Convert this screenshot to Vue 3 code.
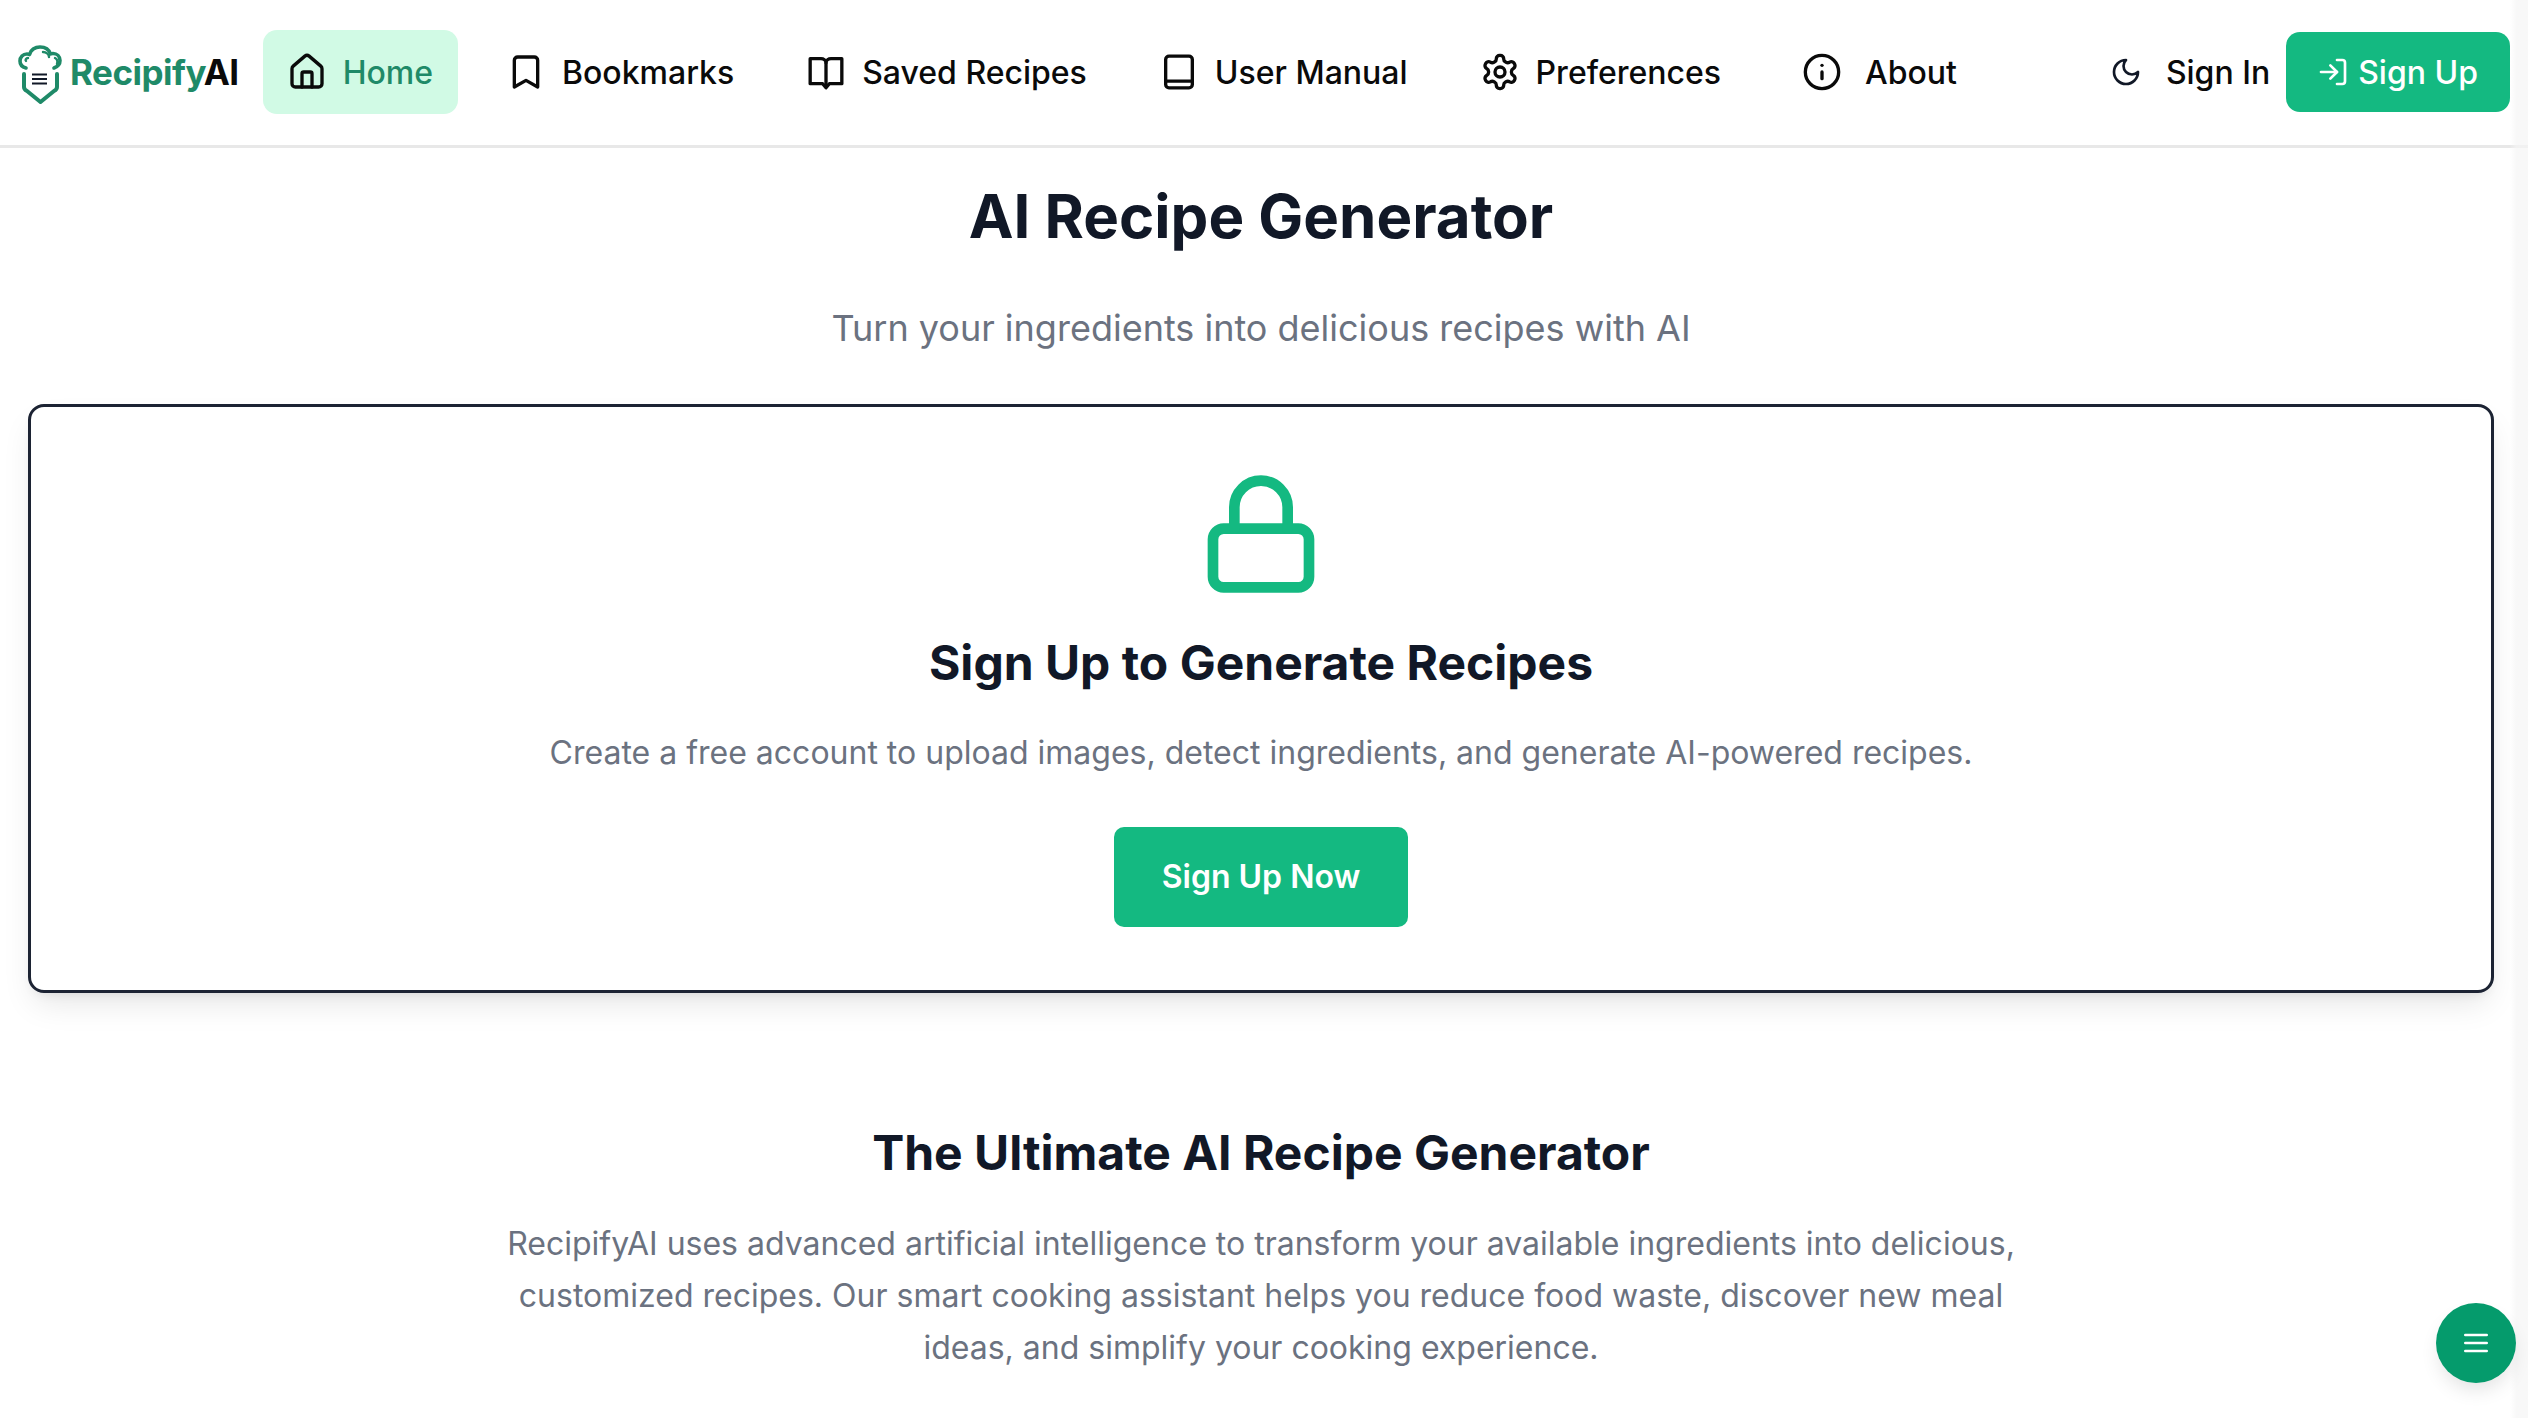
<template>
  <div class="page">
    <header class="topbar">
      <div class="brand">
        <svg class="brand__mark" viewBox="0 0 44 60" fill="none" stroke="#1f8a68" stroke-width="3.6" stroke-linecap="round" stroke-linejoin="round">
          <path d="M8 23c-4-1-6-3.500-6-7 0-4 3-7 7-7 1 0 1.500 0 2.500.5C12.500 5 17 2 22 2c5 0 9 2.500 10.500 7 1-.5 1.500-.5 2.500-.5 4 0 7 3 7 7 0 3.500-2 6-6 7.500" />
          <path d="M8 16c-1-1 0-3 2-3M25 7c3 0 6 2 6 5M37 13c2 1 3 3 2 6" stroke-width="2.4" />
          <path d="M6 29v13c0 2 1 3 3 4l13.500 11 13.500-11c2-1 3-2 3-4V29" stroke-width="4" />
          <path d="M14 29.500h15M14 34h15M14 38.500h15" stroke="#111827" stroke-width="2.2" stroke-linecap="butt" />
        </svg>
        <span class="brand__name">Recipify<span class="brand__ai">AI</span></span>
      </div>

      <nav class="menu">
        <a class="menu__item menu__item--active">
          <svg class="icon" viewBox="0 0 24 24">
            <path d="M15 21v-8a1 1 0 0 0-1-1h-4a1 1 0 0 0-1 1v8" />
            <path d="M3 10a2 2 0 0 1 .709-1.528l7-5.999a2 2 0 0 1 2.582 0l7 5.999A2 2 0 0 1 21 10v9a2 2 0 0 1-2 2H5a2 2 0 0 1-2-2z" />
          </svg>
          Home
        </a>
        <a class="menu__item">
          <svg class="icon" viewBox="0 0 24 24">
            <path d="m19 21-7-4-7 4V5a2 2 0 0 1 2-2h10a2 2 0 0 1 2 2v16z" />
          </svg>
          Bookmarks
        </a>
        <a class="menu__item">
          <svg class="icon" viewBox="0 0 24 24">
            <path d="M12 6.500V20.500" />
            <path d="M12 6.500C12 5 10.500 4 9 4H2.500v15H10l2 2.500 2-2.500h7.500V4H15c-1.500 0-3 1-3 2.500z" />
          </svg>
          Saved Recipes
        </a>
        <a class="menu__item">
          <svg class="icon" viewBox="0 0 24 24">
            <rect x="4" y="2.500" width="16" height="19" rx="2" />
            <path d="M4 17.500h16" />
          </svg>
          User Manual
        </a>
        <a class="menu__item">
          <svg class="icon" viewBox="0 0 24 24">
            <path d="M12.220 2h-.44a2 2 0 0 0-2 2v.18a2 2 0 0 1-1 1.730l-.43.25a2 2 0 0 1-2 0l-.15-.08a2 2 0 0 0-2.730.73l-.22.38a2 2 0 0 0 .73 2.730l.15.1a2 2 0 0 1 1 1.720v.51a2 2 0 0 1-1 1.740l-.15.09a2 2 0 0 0-.73 2.730l.22.38a2 2 0 0 0 2.730.73l.15-.08a2 2 0 0 1 2 0l.43.25a2 2 0 0 1 1 1.730V20a2 2 0 0 0 2 2h.44a2 2 0 0 0 2-2v-.18a2 2 0 0 1 1-1.730l.43-.25a2 2 0 0 1 2 0l.15.08a2 2 0 0 0 2.730-.73l.22-.39a2 2 0 0 0-.73-2.730l-.15-.08a2 2 0 0 1-1-1.740v-.5a2 2 0 0 1 1-1.740l.15-.09a2 2 0 0 0 .73-2.730l-.22-.38a2 2 0 0 0-2.730-.73l-.15.08a2 2 0 0 1-2 0l-.43-.25a2 2 0 0 1-1-1.730V4a2 2 0 0 0-2-2z" />
            <circle cx="12" cy="12" r="3" />
          </svg>
          Preferences
        </a>
        <a class="menu__item menu__item--about">
          <svg class="icon" viewBox="0 0 24 24">
            <circle cx="12" cy="12" r="10" />
            <path d="M12 16v-4" />
            <path d="M12 8h.01" />
          </svg>
          About
        </a>
      </nav>

      <div class="account">
        <button class="account__theme" type="button">
          <svg class="icon icon--small" viewBox="0 0 24 24">
            <path d="M12 3a6 6 0 0 0 9 9 9 9 0 1 1-9-9Z" />
          </svg>
        </button>
        <a class="account__signin">Sign In</a>
        <button class="account__signup" type="button">
          <svg class="icon icon--small" viewBox="0 0 24 24">
            <path d="M15 3h4a2 2 0 0 1 2 2v14a2 2 0 0 1-2 2h-4" />
            <path d="m10 17 5-5-5-5" />
            <path d="M15 12H3" />
          </svg>
          Sign Up
        </button>
      </div>
    </header>

    <main class="content">
      <h1 class="content__title">AI Recipe Generator</h1>
      <p class="content__sub">Turn your ingredients into delicious recipes with AI</p>

      <section class="gate">
        <svg class="gate__lock" viewBox="0 0 24 24">
          <rect x="3" y="11" width="18" height="11" rx="2" ry="2" />
          <path d="M7 11V7a5 5 0 0 1 10 0v4" />
        </svg>
        <h2 class="gate__title">Sign Up to Generate Recipes</h2>
        <p class="gate__text">Create a free account to upload images, detect ingredients, and generate AI-powered recipes.</p>
        <button class="gate__button" type="button">Sign Up Now</button>
      </section>

      <section class="intro">
        <h2 class="intro__title">The Ultimate AI Recipe Generator</h2>
        <p class="intro__text">
          RecipifyAI uses advanced artificial intelligence to transform your available ingredients into delicious, customized recipes. Our smart cooking assistant helps you reduce food waste, discover new meal ideas, and simplify your cooking experience.
        </p>
      </section>
    </main>

    <div class="edge"></div>

    <button class="fab" type="button">
      <svg class="icon icon--small" viewBox="0 0 24 24">
        <path d="M4 12h16" />
        <path d="M4 6h16" />
        <path d="M4 18h16" />
      </svg>
    </button>
  </div>
</template>

<script setup>
</script>

<style>
html,
body {
  margin: 0;
  overflow: hidden;
  background: #fff;
}
</style>

<style scoped>
.page {
  position: relative;
  height: 1418px;
  overflow: hidden;
  font-family: Inter, "Liberation Sans", sans-serif;
  color: #111827;
  background: #fff;
}

.icon {
  width: 40px;
  height: 40px;
  flex: none;
  fill: none;
  stroke: currentColor;
  stroke-width: 2;
  stroke-linecap: round;
  stroke-linejoin: round;
}

.icon--small {
  width: 32px;
  height: 32px;
}

.topbar {
  display: flex;
  align-items: center;
  box-sizing: border-box;
  height: 148px;
  padding: 0 18px 1px;
  border-bottom: 3px solid #e8e8e8;
}

.brand {
  display: flex;
  align-items: center;
  gap: 8px;
  margin-right: 24px;
}

.brand__mark {
  width: 44px;
  height: 60px;
  flex: none;
  margin-top: 6px;
}

.brand__name {
  font-size: 35px;
  font-weight: 700;
  letter-spacing: -0.5px;
  color: #1f8a68;
}

.brand__ai {
  color: #0a0a0a;
}

.menu {
  display: flex;
  align-items: center;
  gap: 24px;
}

.menu__item {
  display: flex;
  align-items: center;
  gap: 16px;
  height: 84px;
  padding: 0 24px;
  border-radius: 14px;
  font-size: 32px;
  font-weight: 500;
  color: #0a0a0a;
}

.menu__item--active {
  padding-right: 25px;
  background: #d1fae5;
  color: #1f8a68;
}

.menu__item--active .icon {
  color: #0a0a0a;
}

.menu__item--about {
  gap: 23px;
  margin-left: 9px;
}

.account {
  display: flex;
  align-items: center;
  margin-left: auto;
}

.account__theme {
  display: flex;
  padding: 0;
  border: 0;
  background: none;
  color: #111827;
}

.account__signin {
  margin: 0 16px 0 24px;
  font-size: 32px;
  font-weight: 500;
  color: #0a0a0a;
}

.account__signup {
  display: flex;
  align-items: center;
  gap: 9px;
  height: 80px;
  padding: 0 32px 0 31px;
  border: 0;
  border-radius: 14px;
  background: #14b981;
  font-family: inherit;
  font-size: 32px;
  font-weight: 500;
  color: #fff;
}

.content {
  padding: 38px 34px 0 28px;
  text-align: center;
}

.content__title {
  margin: 0;
  font-size: 60px;
  line-height: 60px;
  font-weight: 700;
  color: #111827;
}

.content__sub {
  margin: 62px 0 0;
  font-size: 36px;
  line-height: 40px;
  color: #6b7280;
}

.gate {
  display: flex;
  flex-direction: column;
  align-items: center;
  margin-top: 56px;
  padding: 63px 0;
  border: 3px solid #1c2333;
  border-radius: 16px;
  box-shadow: 0 16px 32px -6px rgba(0, 0, 0, 0.1), 0 6px 12px -6px rgba(0, 0, 0, 0.1);
}

.gate__lock {
  display: block;
  width: 128px;
  height: 128px;
  fill: none;
  stroke: #14b981;
  stroke-width: 2;
  stroke-linecap: round;
  stroke-linejoin: round;
}

.gate__title {
  margin: 41px 0 0;
  font-size: 48px;
  line-height: 48px;
  font-weight: 700;
  color: #111827;
}

.gate__text {
  margin: 42px 0 0;
  font-size: 32px;
  line-height: 48px;
  color: #6b7280;
}

.gate__button {
  width: 294px;
  height: 100px;
  margin-top: 50px;
  padding: 0 0 2px;
  border: 0;
  border-radius: 10px;
  background: #14b981;
  font-family: inherit;
  font-size: 32px;
  font-weight: 600;
  color: #fff;
}

.intro {
  margin-top: 136px;
}

.intro__title {
  margin: 0;
  font-size: 48px;
  line-height: 48px;
  font-weight: 700;
  color: #111827;
}

.intro__text {
  max-width: 1536px;
  margin: 41px auto 0;
  font-size: 32px;
  line-height: 52px;
  color: #6b7280;
}

.edge {
  position: absolute;
  top: 0;
  right: 0;
  bottom: 0;
  width: 18px;
  background: linear-gradient(90deg, rgba(245, 245, 245, 0), rgba(245, 245, 245, 0.7) 35%);
}

.fab {
  position: absolute;
  right: 12px;
  bottom: 35px;
  display: flex;
  align-items: center;
  justify-content: center;
  width: 80px;
  height: 80px;
  padding: 0;
  border: 0;
  border-radius: 50%;
  background: #059b6c;
  color: #fff;
  box-shadow: 0 10px 20px -4px rgba(0, 0, 0, 0.12);
}
</style>
